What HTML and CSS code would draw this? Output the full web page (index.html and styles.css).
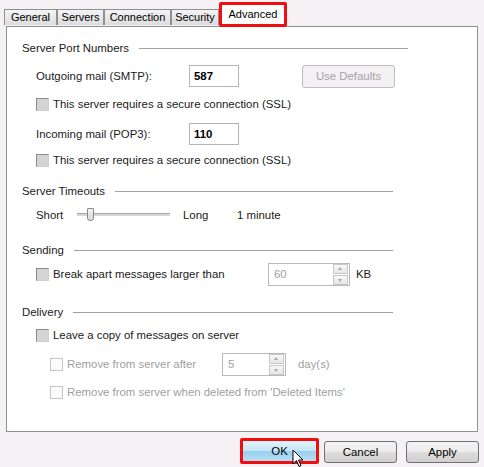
FILE: index.html
```html
<!DOCTYPE html>
<html lang="en">
<head>
    <meta charset="UTF-8">
    <title>Account Properties - Advanced</title>
    <link rel="stylesheet" href="styles.css">
</head>
<body>
    <div class="dialog">
        <div class="tabs">
            <div class="tab">General</div>
            <div class="tab">Servers</div>
            <div class="tab">Connection</div>
            <div class="tab">Security</div>
            <div class="tab active">Advanced</div>
        </div>

        <div class="panel">
            <!-- Server Port Numbers -->
            <div class="group-title first"><span>Server Port Numbers</span><div class="rule"></div></div>
            <div class="row r-smtp">
                <span class="field-label">Outgoing mail (SMTP):</span>
                <div class="port">587</div>
                <button class="btn-defaults" disabled>Use Defaults</button>
            </div>
            <div class="row r-ssl1">
                <span class="check"></span>
                <span>This server requires a secure connection (SSL)</span>
            </div>
            <div class="row r-pop">
                <span class="field-label">Incoming mail (POP3):</span>
                <div class="port">110</div>
            </div>
            <div class="row r-ssl2">
                <span class="check"></span>
                <span>This server requires a secure connection (SSL)</span>
            </div>

            <!-- Server Timeouts -->
            <div class="group-title r-h2"><span>Server Timeouts</span><div class="rule"></div></div>
            <div class="row r-slider">
                <span class="slider-label">Short</span>
                <div class="slider">
                    <div class="track"></div>
                    <div class="thumb"></div>
                </div>
                <span class="long">Long</span>
                <span class="minute">1 minute</span>
            </div>

            <!-- Sending -->
            <div class="group-title r-h3"><span>Sending</span><div class="rule"></div></div>
            <div class="row r-break">
                <span class="check"></span>
                <span class="break-label">Break apart messages larger than</span>
                <div class="spin spin-kb">
                    <span class="spin-value">60</span>
                    <div class="spin-btns"><span class="up"></span><span class="down"></span></div>
                </div>
                <span class="unit">KB</span>
            </div>

            <!-- Delivery -->
            <div class="group-title r-h4"><span>Delivery</span><div class="rule"></div></div>
            <div class="row r-leave">
                <span class="check"></span>
                <span>Leave a copy of messages on server</span>
            </div>
            <div class="row sub r-remove1 disabled">
                <span class="check off"></span>
                <span class="remove-label">Remove from server after</span>
                <div class="spin spin-days">
                    <span class="spin-value">5</span>
                    <div class="spin-btns"><span class="up"></span><span class="down"></span></div>
                </div>
                <span class="unit days">day(s)</span>
            </div>
            <div class="row sub r-remove2 disabled">
                <span class="check off"></span>
                <span>Remove from server when deleted from 'Deleted Items'</span>
            </div>
        </div>

        <div class="footer">
            <button class="btn primary">OK</button>
            <button class="btn">Cancel</button>
            <button class="btn">Apply</button>
            <svg class="cursor" width="13" height="19" viewBox="0 0 13 19">
                <path d="M1 1 L1 15 L4.5 11.5 L7 17.5 L9 16.6 L6.6 11 L11 11 Z" fill="#fff" stroke="#000" stroke-width="1"/>
            </svg>
        </div>
    </div>
</body>
</html>
```

FILE: styles.css
```css
body {
    margin: 0;
    background-color: #f5f1f4; /* dialog face */
    font-family: "Liberation Sans", Arial, sans-serif;
    font-size: 11.4px;
    color: #1a1a1a;
}
.dialog {
    width: 484px;
    height: 467px;
    position: relative;
}
.tabs {
    display: flex;
    align-items: flex-end;
    height: 26px;
    padding-left: 4px;
}
.tab {
    height: 15px;
    line-height: 15px;
    text-align: center;
    font-size: 11px;
    color: #000;
    border: 1px solid #8e8f94;
    border-bottom: none;
    background: linear-gradient(#f4f4f4, #dcdcdc);
    position: relative;
    top: -1px;
}
.tab:nth-child(1) { width: 51px; }
.tab:nth-child(2) { width: 45px; }
.tab:nth-child(3) { width: 65px; }
.tab:nth-child(4) { width: 46px; }
.tab.active {
    width: 62px;
    height: 19px;
    line-height: 18px;
    background: #fff;
    border: 3px solid #f00e0e; /* highlight */
    border-radius: 2px;
    top: 1px;
    z-index: 2;
}
.panel {
    margin: 0 6px 0 6px;
    height: 406px;
    background-color: #fff;
    border: 1px solid #8e8e93;
    padding: 10px 0 0 0;
    box-sizing: border-box;
}
.group-title {
    display: flex;
    align-items: center;
    height: 22px;
    margin-left: 15px;
    margin-right: 84px;
}
.group-title .rule {
    flex: 1;
    height: 1px;
    margin-left: 10px;
    background-color: #a0a0a0;
}
.group-title.first { margin-right: 69px; }
.row {
    display: flex;
    align-items: center;
    height: 22px;
    margin-left: 29px;
}
.row.sub { margin-left: 43px; }
.r-smtp { margin-top: 6px; }
.r-ssl1 { margin-top: 6px; }
.r-pop { margin-top: 8px; }
.r-ssl2 { margin-top: 4px; }
.r-h2 { margin-top: 9px; }
.r-slider { margin-top: 2px; }
.r-h3 { margin-top: 13px; }
.r-break { margin-top: 2px; }
.r-h4 { margin-top: 16px; }
.r-leave { margin-top: 1px; }
.r-remove1 { margin-top: 7px; }
.r-remove2 { margin-top: 6px; }

.field-label { width: 153px; }
.port {
    width: 44px;
    height: 20px;
    line-height: 20px;
    padding-left: 4px;
    border: 1px solid #b5b5b5;
    font-weight: bold;
    color: #000;
}
.btn-defaults {
    margin-left: 63px;
    width: 93px;
    height: 23px;
    font-family: inherit;
    font-size: 11.4px;
    color: #a3a3a3;
    background-color: #f4f1f4;
    border: 1px solid #bdbdbd;
    border-radius: 3px;
}
.check {
    width: 11px;
    height: 11px;
    margin-right: 4px;
    background-color: #d4d4d4;
    border: 1px solid;
    border-color: #8c8c8c #cfcfcf #cfcfcf #8c8c8c;
}
.check.off {
    background-color: #fbfbfb;
    border-color: #c4c4c4;
}
.disabled { color: #a0a0a0; }

.slider-label { width: 41px; }
.slider {
    position: relative;
    width: 93px;
    height: 14px;
}
.track {
    position: absolute;
    left: 0;
    right: 0;
    top: 5px;
    height: 2px;
    background-color: #d6d6d6;
    border-top: 1px solid #a8a8a8;
}
.thumb {
    position: absolute;
    left: 10px;
    top: 0;
    width: 5px;
    height: 11px;
    background: linear-gradient(#f2f2f2, #d8d8d8);
    border: 1px solid #8a8a8a;
    border-radius: 1px 1px 3px 3px;
}
.long { margin-left: 13px; width: 54px; }

.break-label { width: 215px; }
.spin {
    display: flex;
    height: 21px;
    border: 1px solid #b9b9b9;
    color: #a0a0a0;
    background-color: #fff;
}
.spin-value { flex: 1; line-height: 21px; padding-left: 5px; }
.spin-kb { width: 80px; }
.spin-days { width: 62px; margin-left: 2px; }
.spin-btns {
    display: flex;
    flex-direction: column;
    justify-content: center;
    gap: 1px;
    padding-right: 1px;
}
.spin-btns span {
    width: 13px;
    height: 8px;
    background: linear-gradient(#f8f8f8, #e6e6e6);
    border: 1px solid #c8c8c8;
    position: relative;
}
.spin-btns span::after {
    content: "";
    position: absolute;
    left: 4px;
    border-left: 2.5px solid transparent;
    border-right: 2.5px solid transparent;
}
.spin-btns .up::after { top: 2px; border-bottom: 3px solid #a8a8a8; }
.spin-btns .down::after { top: 3px; border-top: 3px solid #a8a8a8; }
.remove-label { width: 153px; }
.unit { margin-left: 6px; color: #1a1a1a; }
.unit.days { margin-left: 12px; color: #a0a0a0; }

.footer {
    display: flex;
    justify-content: flex-end;
    gap: 9px;
    padding: 9px 5px 0 0;
    position: relative;
}
.btn {
    width: 73px;
    height: 22px;
    font-family: inherit;
    font-size: 11.4px;
    color: #000;
    border: 1px solid #707070;
    border-radius: 3px;
    background: linear-gradient(#f3f3f3 0%, #ebebeb 50%, #dddddd 51%, #cfcfcf 100%);
    padding: 0;
}
.btn.primary {
    width: 79px;
    height: 26px;
    margin-top: -3px;
    margin-right: -4px;
    border: 3px solid #f00e0e;
    border-radius: 2px;
    background: linear-gradient(#e5f4fc 0%, #c4e5f6 50%, #98d1ef 51%, #b6ddf3 100%);
}
.cursor {
    position: absolute;
    left: 292px;
    top: 17px;
}
```
